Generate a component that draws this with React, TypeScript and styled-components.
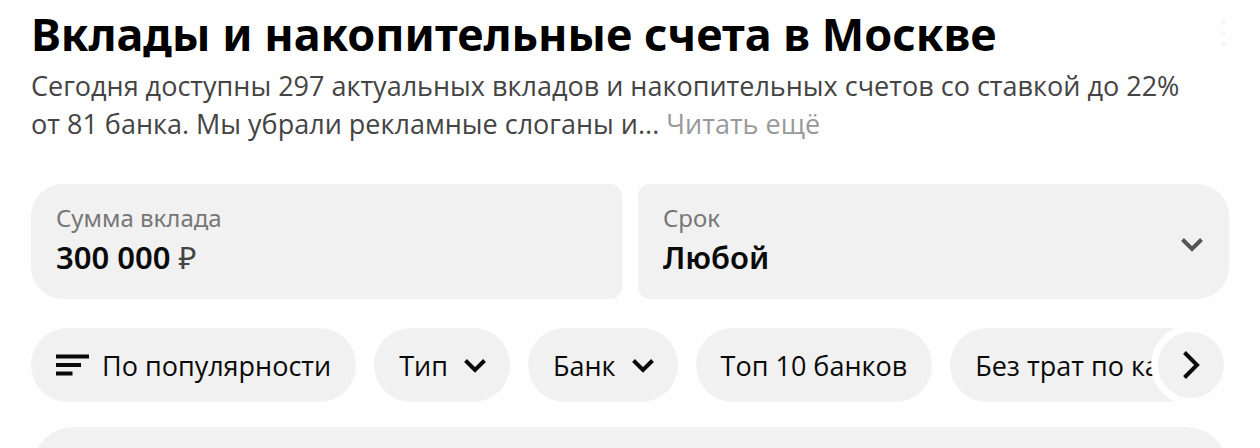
import React from 'react';
import styled, { createGlobalStyle } from 'styled-components';

const GlobalStyle = createGlobalStyle`
  *, *::before, *::after { box-sizing: border-box; }
  body {
    margin: 0;
    background: #fefefe;
    color: #0a0a0a;
    font-family: 'Noto Sans', 'Open Sans', sans-serif;
  }
  button, input, select { font: inherit; color: inherit; }
`;

const Page = styled.main`
  display: flex;
  flex-direction: column;
  height: 100vh;
  padding: 6px 31px 0;
  overflow: hidden auto;
  scrollbar-width: none;

  > * { flex: none; }
`;

const Header = styled.header`
  display: flex;
  justify-content: space-between;
  align-items: center;
  height: 56px;
`;

const Title = styled.h1`
  margin: 0;
  font-size: 45px;
  line-height: 56px;
  font-weight: 700;
  color: #000;
  white-space: nowrap;
`;

const MoreButton = styled.button`
  display: flex;
  padding: 0;
  border: 0;
  background: none;
  color: #f6f6f6;
`;

const Summary = styled.p`
  margin: 5px 0 0;
  font-family: 'Open Sans', 'Noto Sans', sans-serif;
  font-size: 27px;
  line-height: 38px;
  color: #444;
`;

const MoreLink = styled.a`
  color: #999;
  text-decoration: none;
`;

const Fields = styled.div`
  display: grid;
  grid-template-columns: 1fr 1fr;
  gap: 16px;
  margin-top: 41px;
`;

const Field = styled.div<{ $side: 'left' | 'right' }>`
  display: flex;
  flex-direction: column;
  padding: 18px 25px 19px;
  background: #f1f1f1;
  border-radius: ${(p) => (p.$side === 'left' ? '32px 12px 12px 32px' : '12px 32px 32px 12px')};
`;

const SelectField = styled(Field)`
  display: grid;
  grid-template-columns: 1fr 24px;
  align-items: center;
`;

const FieldLabel = styled.label`
  font-size: 24px;
  line-height: 32px;
  color: #777;
`;

const ValueRow = styled.div`
  display: flex;
  align-items: center;
  gap: 8px;
  height: 46px;
  font-size: 31px;
  line-height: 46px;
`;

const AmountInput = styled.input`
  field-sizing: content;
  height: 46px;
  padding: 0;
  border: 0;
  outline: 0;
  background: none;
  font-weight: 600;
`;

const Currency = styled.span`
  color: #444;
`;

const TermSelect = styled.select`
  grid-column: 1 / -1;
  grid-row: 2;
  appearance: none;
  height: 46px;
  padding: 0;
  border: 0;
  outline: 0;
  background: none;
  font-size: 31px;
  line-height: 46px;
  font-weight: 600;
`;

const TermArrow = styled.span`
  grid-column: 2;
  grid-row: 1 / 3;
  display: flex;
  justify-content: center;
  padding-top: 6px;
  color: #555;
  pointer-events: none;
`;

const Filters = styled.div`
  position: relative;
  margin-top: 29px;
`;

const ChipList = styled.div`
  display: flex;
  gap: 18px;
  margin-right: 40px;
  overflow: hidden;
  font-family: 'Open Sans', 'Noto Sans', sans-serif;
  font-size: 27px;
`;

const Chip = styled.button`
  flex: none;
  display: flex;
  align-items: center;
  gap: 13px;
  height: 74px;
  padding: 0 25px;
  border: 0;
  border-radius: 37px;
  background: #f1f1f1;
  white-space: nowrap;
`;

const ChipSelectBox = styled.div`
  flex: none;
  display: grid;
  align-items: center;
  height: 74px;
  border-radius: 37px;
  background: #f1f1f1;
`;

const ChipSelect = styled.select`
  grid-area: 1 / 1;
  field-sizing: content;
  appearance: none;
  height: 74px;
  padding: 0 62px 0 25px;
  border: 0;
  outline: 0;
  background: none;
`;

const ChipArrow = styled.span`
  grid-area: 1 / 1;
  justify-self: end;
  display: flex;
  margin-right: 23px;
  pointer-events: none;
`;

const NextButton = styled.button`
  position: absolute;
  top: -3px;
  right: -2px;
  display: flex;
  align-items: center;
  justify-content: center;
  width: 80px;
  height: 80px;
  padding: 0;
  border: 7px solid #fefefe;
  border-radius: 50%;
  background: #f1f1f1;
`;

const Card = styled.section`
  margin-top: 25px;
  min-height: 120px;
  border-radius: 44px;
  background: #f1f1f1;
`;

const Chevron = () => (
  <svg width="24" height="16" viewBox="0 0 24 16" fill="none" stroke="currentColor" strokeWidth="4" aria-hidden="true">
    <path d="M2.500 3.500 L12 13 L21.500 3.500" />
  </svg>
);

const chips = [
  { name: 'Тип', options: ['Тип', 'Вклад', 'Накопительный счёт'] },
  { name: 'Банк', options: ['Банк'] },
];

export default function App() {
  return (
    <>
      <GlobalStyle />
      <Page>
        <Header>
          <Title>Вклады и накопительные счета в Москве</Title>
          <MoreButton type="button" aria-label="Ещё">
            <svg width="12" height="32" viewBox="0 0 12 32" fill="currentColor" aria-hidden="true">
              <circle cx="6" cy="4" r="2.500" />
              <circle cx="6" cy="15" r="2.500" />
              <circle cx="6" cy="26" r="2.500" />
            </svg>
          </MoreButton>
        </Header>
        <Summary>
          Сегодня доступны 297 актуальных вкладов и накопительных счетов со ставкой до 22%
          <br />
          от 81 банка. Мы убрали рекламные слоганы и... <MoreLink href="#more">Читать ещё</MoreLink>
        </Summary>

        <Fields>
          <Field $side="left">
            <FieldLabel htmlFor="amount">Сумма вклада</FieldLabel>
            <ValueRow>
              <AmountInput id="amount" inputMode="numeric" defaultValue="300 000" />
              <Currency>₽</Currency>
            </ValueRow>
          </Field>
          <SelectField $side="right">
            <FieldLabel htmlFor="term">Срок</FieldLabel>
            <TermSelect id="term" defaultValue="Любой">
              <option>Любой</option>
            </TermSelect>
            <TermArrow>
              <Chevron />
            </TermArrow>
          </SelectField>
        </Fields>

        <Filters>
          <ChipList>
            <Chip type="button">
              <svg width="33" height="22" viewBox="0 0 33 22" fill="currentColor" aria-hidden="true">
                <path d="M0 0.500H33V4.500H0zM0 9H25V13H0zM0 17.500H16.500V21.500H0z" />
              </svg>
              По популярности
            </Chip>
            {chips.map((chip) => (
              <ChipSelectBox key={chip.name}>
                <ChipSelect aria-label={chip.name} defaultValue={chip.name}>
                  {chip.options.map((option) => (
                    <option key={option}>{option}</option>
                  ))}
                </ChipSelect>
                <ChipArrow>
                  <Chevron />
                </ChipArrow>
              </ChipSelectBox>
            ))}
            <Chip type="button">Топ 10 банков</Chip>
            <Chip type="button">Без трат по карте</Chip>
          </ChipList>
          <NextButton type="button" aria-label="Следующие фильтры">
            <svg width="18" height="30" viewBox="0 0 18 30" fill="none" stroke="currentColor" strokeWidth="4" aria-hidden="true">
              <path d="M2.500 2.500 L15 15 L2.500 27.500" />
            </svg>
          </NextButton>
        </Filters>

        <Card aria-label="Предложения" />
      </Page>
    </>
  );
}
